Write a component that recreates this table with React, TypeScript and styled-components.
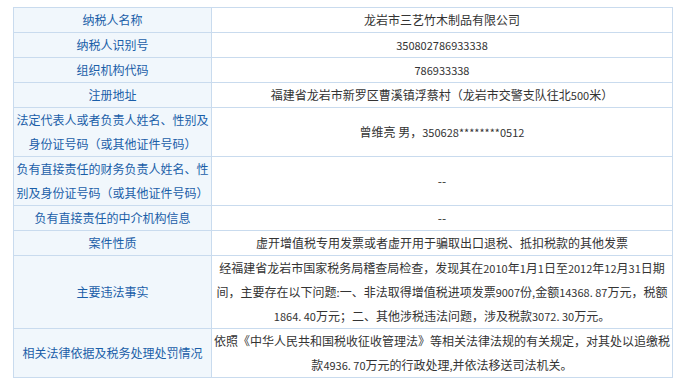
import React from "react";
import styled, { createGlobalStyle } from "styled-components";

const GlobalStyle = createGlobalStyle`
  html, body {
    margin: 0;
    padding: 0;
    background: #ffffff;
  }
  body {
    font-family: "Noto Sans CJK SC", "Noto Sans", sans-serif;
    font-size: 12px;
  }
`;

const Page = styled.div`
  padding: 7px 0 0 13px;
`;

const Table = styled.table`
  width: 659px;
  border-collapse: collapse;
  table-layout: fixed;
  font-size: 12px;
  line-height: 24px;
`;

const LabelCol = styled.col`
  width: 198px;
`;

const ValueCol = styled.col`
  width: 461px;
`;

const Label = styled.th`
  border: 1px solid #c9dbee;
  background: #f1f7fc;
  color: #1a5ea8;
  font-weight: normal;
  text-align: center;
  vertical-align: middle;
  padding: 0;
`;

const Value = styled.td`
  border: 1px solid #c9dbee;
  background: #ffffff;
  color: #333333;
  text-align: center;
  vertical-align: middle;
  padding: 0;
`;

const Line = styled.div`
  white-space: nowrap;
`;

const Num = styled.span`
  font-size: 11px;
`;

const rows: { label: React.ReactNode; value: React.ReactNode }[] = [
  { label: "纳税人名称", value: "龙岩市三艺竹木制品有限公司" },
  { label: "纳税人识别号", value: <Num>350802786933338</Num> },
  { label: "组织机构代码", value: <Num>786933338</Num> },
  {
    label: "注册地址",
    value: (
      <>
        福建省龙岩市新罗区曹溪镇浮蔡村（龙岩市交警支队往北<Num>500</Num>米）
      </>
    ),
  },
  {
    label: "法定代表人或者负责人姓名、性别及身份证号码（或其他证件号码）",
    value: (
      <>
        曾维亮 男，<Num>350628********0512</Num>
      </>
    ),
  },
  {
    label: "负有直接责任的财务负责人姓名、性别及身份证号码（或其他证件号码）",
    value: "--",
  },
  { label: "负有直接责任的中介机构信息", value: "--" },
  {
    label: "案件性质",
    value: "虚开增值税专用发票或者虚开用于骗取出口退税、抵扣税款的其他发票",
  },
  {
    label: "主要违法事实",
    value: (
      <>
        <Line>
          经福建省龙岩市国家税务局稽查局检查，发现其在<Num>2010</Num>年<Num>1</Num>月<Num>1</Num>日至<Num>2012</Num>年<Num>12</Num>月<Num>31</Num>日期
        </Line>
        <Line>
          间，主要存在以下问题<Num>:</Num>一、非法取得增值税进项发票<Num>9007</Num>份<Num>,</Num>金额<Num>14368. 87</Num>万元，税额
        </Line>
        <Line>
          <Num>1864. 40</Num>万元；二、其他涉税违法问题，涉及税款<Num>3072. 30</Num>万元。
        </Line>
      </>
    ),
  },
  {
    label: "相关法律依据及税务处理处罚情况",
    value: (
      <>
        <Line>依照《中华人民共和国税收征收管理法》等相关法律法规的有关规定，对其处以追缴税</Line>
        <Line>
          款<Num>4936. 70</Num>万元的行政处理<Num>,</Num>并依法移送司法机关。
        </Line>
      </>
    ),
  },
];

export default function App() {
  return (
    <>
      <GlobalStyle />
      <Page>
        <Table>
          <colgroup>
            <LabelCol />
            <ValueCol />
          </colgroup>
          <tbody>
            {rows.map((r, i) => (
              <tr key={i}>
                <Label>{r.label}</Label>
                <Value>{r.value}</Value>
              </tr>
            ))}
          </tbody>
        </Table>
      </Page>
    </>
  );
}
